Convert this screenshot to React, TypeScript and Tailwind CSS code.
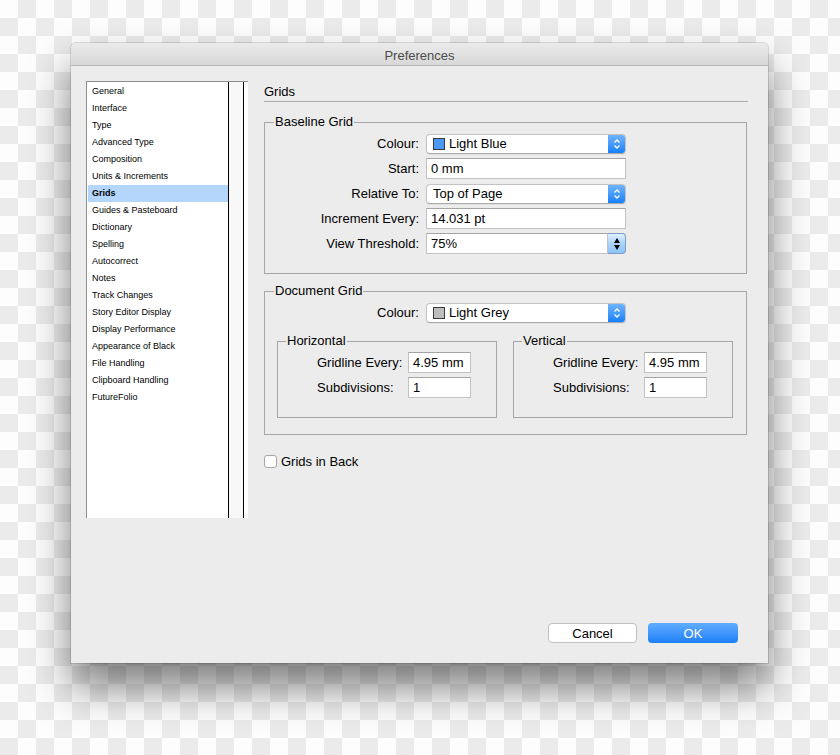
import React from 'react';

const SECTIONS = [
    'General',
    'Interface',
    'Type',
    'Advanced Type',
    'Composition',
    'Units & Increments',
    'Grids',
    'Guides & Pasteboard',
    'Dictionary',
    'Spelling',
    'Autocorrect',
    'Notes',
    'Track Changes',
    'Story Editor Display',
    'Display Performance',
    'Appearance of Black',
    'File Handling',
    'Clipboard Handling',
    'FutureFolio',
];

function Chevrons() {
    return (
        <svg width="8" height="12" viewBox="0 0 8 12" fill="none">
            <path d="M1.5 4.5 L4 2 L6.5 4.5" stroke="white" strokeWidth="1.3" />
            <path d="M1.5 7.5 L4 10 L6.5 7.5" stroke="white" strokeWidth="1.3" />
        </svg>
    );
}

function PopUp({ value, swatch }: { value: string; swatch?: string }) {
    return (
        <div className="flex h-[20px] w-[200px] overflow-hidden rounded-[4px] border border-[#c3c3c3] border-b-[#a9a9a9] bg-white shadow-[0_1px_0_rgba(0,0,0,0.04)]">
            <div className="flex flex-1 items-center gap-[4px] pl-[6px] text-[13px] leading-none">
                {swatch && (
                    <span
                        className={`block h-[12px] w-[12px] border border-[#3a3a3a] ${swatch}`}
                    />
                )}
                <span>{value}</span>
            </div>
            <div className="flex w-[17px] items-center justify-center bg-gradient-to-b from-[#6db3fb] to-[#0f7ffb]">
                <Chevrons />
            </div>
        </div>
    );
}

function Field({ value, className = 'w-[200px]' }: { value: string; className?: string }) {
    return (
        <div
            className={`flex h-[21px] items-center border border-[#c2c2c2] border-t-[#a5a5a5] bg-white pl-[4px] text-[13px] leading-none ${className}`}
        >
            {value}
        </div>
    );
}

function Combo({ value }: { value: string }) {
    return (
        <div className="flex h-[21px] w-[200px]">
            <div className="flex flex-1 items-center border border-[#c2c2c2] border-t-[#a5a5a5] bg-white pl-[4px] text-[13px] leading-none">
                {value}
            </div>
            <div className="flex w-[18px] flex-col items-center justify-center gap-[2px] rounded-r-[4px] border border-l-0 border-[#7f9cc0] bg-gradient-to-b from-[#e2f1ff] via-[#a9d3fa] to-[#8cc4f6]">
                <span className="block h-0 w-0 border-x-[3px] border-b-[5px] border-x-transparent border-b-black" />
                <span className="block h-0 w-0 border-x-[3px] border-t-[5px] border-x-transparent border-t-black" />
            </div>
        </div>
    );
}

function Row({ label, children }: { label: string; children: React.ReactNode }) {
    return (
        <div className="flex h-[25px] items-center">
            <span className="w-[155px] pr-[1px] text-right text-[13px]">{label}</span>
            <div className="ml-[6px]">{children}</div>
        </div>
    );
}

function SubGroup({ title }: { title: string }) {
    return (
        <fieldset className="w-[220px] border border-[#a6a6a6] pb-[17px] pt-[1px]">
            <legend className="ml-[8px] px-[1px] text-[13px] leading-[16px]">{title}</legend>
            <div className="pl-[39px]">
                <div className="flex h-[25px] items-center">
                    <span className="w-[91px] text-[13px]">Gridline Every:</span>
                    <Field value="4.95 mm" className="w-[63px]" />
                </div>
                <div className="flex h-[25px] items-center">
                    <span className="w-[91px] text-[13px]">Subdivisions:</span>
                    <Field value="1" className="w-[63px]" />
                </div>
            </div>
        </fieldset>
    );
}

export default function App() {
    return (
        <div
            className="h-[755px] w-[840px] overflow-hidden bg-white bg-[conic-gradient(#ebebeb_0_25%,#fdfdfd_0_50%,#ebebeb_0_75%,#fdfdfd_0)] bg-[length:36px_36px] pl-[71px] pt-[43px] text-black"
            style={{ fontFamily: '"Liberation Sans", Arial, sans-serif' }}
        >
            <div className="flex h-[620px] w-[697px] flex-col rounded-t-[5px] bg-[#ececec] shadow-[0_24px_40px_rgba(0,0,0,0.5),0_0_0_1px_rgba(0,0,0,0.12)]">
                {/* title bar */}
                <div className="flex h-[23px] items-center justify-center rounded-t-[5px] border-b border-[#b5b5b5] bg-gradient-to-b from-[#ebebeb] to-[#d8d8d8] pt-[3px] text-[13px] text-[#4d4d4d]">
                    Preferences
                </div>

                <div className="flex flex-1 pl-[15px] pt-[15px]">
                    {/* section list */}
                    <div className="flex h-[437px] w-[162px] border-l border-t border-[#8e8e8e] bg-white">
                        <ul className="flex-1 pl-[1px] pt-[1px]">
                            {SECTIONS.map(s => (
                                <li
                                    key={s}
                                    className={`flex h-[17px] items-center pl-[4px] text-[9px] ${
                                        s === 'Grids' ? 'bg-[#b4d6fd] font-bold' : ''
                                    }`}
                                >
                                    {s}
                                </li>
                            ))}
                        </ul>
                        <div className="w-[16px] border-x border-black bg-[#f8f8f8]" />
                        <div className="w-[4px]" />
                    </div>

                    {/* grids panel */}
                    <div className="ml-[16px] w-[484px]">
                        <div className="border-b border-[#a9a9a9] pb-[2px] pt-[3px] text-[13px] leading-[15px]">
                            Grids
                        </div>

                        <fieldset className="mt-[12px] w-[483px] border border-[#a6a6a6] pb-[17px] pt-[1px]">
                            <legend className="ml-[9px] px-[1px] text-[13px] leading-[16px]">
                                Baseline Grid
                            </legend>
                            <Row label="Colour:">
                                <PopUp value="Light Blue" swatch="bg-[#4b9bf6]" />
                            </Row>
                            <Row label="Start:">
                                <Field value="0 mm" />
                            </Row>
                            <Row label="Relative To:">
                                <PopUp value="Top of Page" />
                            </Row>
                            <Row label="Increment Every:">
                                <Field value="14.031 pt" />
                            </Row>
                            <Row label="View Threshold:">
                                <Combo value="75%" />
                            </Row>
                        </fieldset>

                        <fieldset className="mt-[9px] w-[483px] border border-[#a6a6a6] pb-[16px] pt-[1px]">
                            <legend className="ml-[9px] px-[1px] text-[13px] leading-[16px]">
                                Document Grid
                            </legend>
                            <Row label="Colour:">
                                <PopUp value="Light Grey" swatch="bg-[#bdbdbd]" />
                            </Row>
                            <div className="mt-[8px] flex gap-[16px] pl-[12px]">
                                <SubGroup title="Horizontal" />
                                <SubGroup title="Vertical" />
                            </div>
                        </fieldset>

                        <label className="mt-[17px] flex items-center gap-[4px] text-[13px]">
                            <span className="block h-[13px] w-[13px] rounded-[3px] border border-[#a8a8a8] bg-white" />
                            Grids in Back
                        </label>
                    </div>
                </div>

                {/* buttons */}
                <div className="flex justify-end gap-[11px] pb-[20px] pr-[30px]">
                    <button className="h-[20px] w-[89px] rounded-[4px] border border-[#c0c0c0] bg-white text-[13px] leading-none">
                        Cancel
                    </button>
                    <button className="h-[20px] w-[90px] rounded-[4px] bg-gradient-to-b from-[#60acff] to-[#1a7ff7] text-[13px] leading-none text-white">
                        OK
                    </button>
                </div>
            </div>
        </div>
    );
}
